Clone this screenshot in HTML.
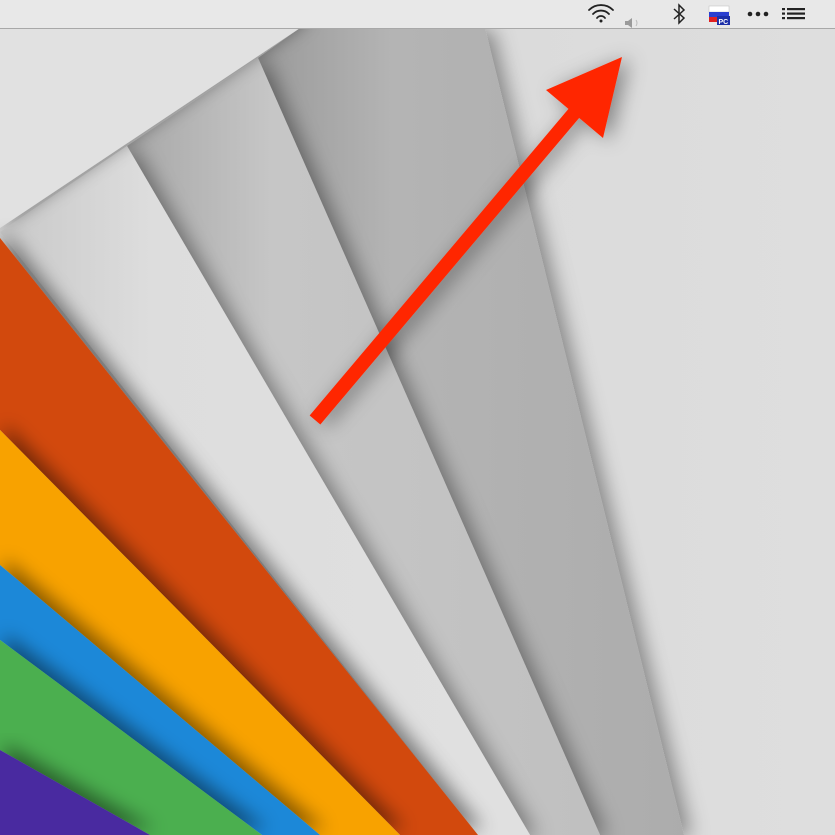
<!DOCTYPE html>
<html><head><meta charset="utf-8"><style>
html,body{margin:0;padding:0;width:835px;height:835px;overflow:hidden;background:#dddddd}
svg{display:block}
</style></head><body>
<svg width="835" height="835" viewBox="0 0 835 835" xmlns="http://www.w3.org/2000/svg">
<defs>
<filter id="sh" x="-20%" y="-20%" width="140%" height="140%">
<feDropShadow dx="7" dy="2" stdDeviation="10" flood-color="#000" flood-opacity="0.4"/>
</filter>
<filter id="sh2" x="-20%" y="-20%" width="140%" height="140%">
<feDropShadow dx="5" dy="-6" stdDeviation="9" flood-color="#000" flood-opacity="0.45"/>
</filter>
<linearGradient id="gr" x1="0" y1="0" x2="1" y2="0">
<stop offset="0" stop-color="#d6d6d6"/><stop offset="1" stop-color="#dedede"/>
</linearGradient>
<linearGradient id="g3" gradientUnits="userSpaceOnUse" x1="260" y1="0" x2="700" y2="0">
<stop offset="0" stop-color="#9a9a9a"/><stop offset="0.3" stop-color="#b4b4b4"/><stop offset="1" stop-color="#acacac"/>
</linearGradient>
<linearGradient id="g2" gradientUnits="userSpaceOnUse" x1="130" y1="0" x2="600" y2="0">
<stop offset="0" stop-color="#a8a8a8"/><stop offset="0.3" stop-color="#c6c6c6"/><stop offset="1" stop-color="#c0c0c0"/>
</linearGradient>
<linearGradient id="g1" gradientUnits="userSpaceOnUse" x1="0" y1="0" x2="500" y2="0">
<stop offset="0" stop-color="#c8c8c8"/><stop offset="0.3" stop-color="#dddddd"/><stop offset="1" stop-color="#e0e0e0"/>
</linearGradient>
</defs>
<rect x="0" y="0" width="835" height="835" fill="url(#gr)"/>
<polygon points="258,58 300,28 485,28 684,835 600,835" fill="url(#g3)" filter="url(#sh)"/>
<polygon points="127,146 258,58 600,835 530,835" fill="url(#g2)" filter="url(#sh)"/>
<polygon points="0,232 127,146 530,835 478,835" fill="url(#g1)" filter="url(#sh)"/>
<polygon points="0,0 300,0 300,28 0,228" fill="#e1e1e1" filter="url(#sh2)"/>
<polygon points="0,238 478,835 400,835 0,430" fill="#d24a10" filter="url(#sh2)"/>
<polygon points="0,430 400,835 320,835 0,565" fill="#f8a200" filter="url(#sh2)"/>
<polygon points="0,565 320,835 262,835 0,640" fill="#1e88d8" filter="url(#sh2)"/>
<polygon points="0,640 262,835 150,835 0,750" fill="#4caf50" filter="url(#sh2)"/>
<polygon points="0,750 150,835 0,835" fill="#4a2aa0" filter="url(#sh2)"/>
<!-- arrow -->
<g filter="url(#sh)">
<line x1="315" y1="420" x2="575" y2="112" stroke="#ff2600" stroke-width="14"/>
<polygon points="546,90 622,57 603,138" fill="#ff2600"/>
</g>
<!-- menu bar -->
<rect x="0" y="0" width="835" height="28" fill="#e8e8e8"/>
<rect x="0" y="28" width="835" height="1" fill="#a8a8a8"/>
<g fill="none" stroke="#222" stroke-width="1.8" stroke-linecap="round">
<path d="M589,10 A17,17 0 0 1 613,10"/>
<path d="M593,14 A11,11 0 0 1 609,14"/>
<path d="M597,18 A5,5 0 0 1 605,18"/>
</g>
<circle cx="601" cy="21" r="1.5" fill="#222"/>
<path d="M625,21 h3 l4,-3 v10 l-4,-3 h-3z" fill="#9a9a9a"/>
<path d="M636,20 q2,3 0,6" stroke="#bbb" fill="none" stroke-width="1"/>
<path d="M674,9 l10,9 l-5,5 v-18 l5,5 l-10,9" fill="none" stroke="#222" stroke-width="1.5"/>
<rect x="709" y="6" width="20" height="6" fill="#fff" stroke="#bbb" stroke-width="0.5"/>
<rect x="709" y="12" width="20" height="5" fill="#2a3fd0"/>
<rect x="709" y="17" width="20" height="5" fill="#e02020"/>
<rect x="717" y="16" width="13" height="9" fill="#1c2fa8"/>
<text x="718.5" y="24" font-family="Liberation Sans, sans-serif" font-size="7" font-weight="bold" fill="#fff">PC</text>
<circle cx="750" cy="14" r="2.3" fill="#222"/><circle cx="758" cy="14" r="2.3" fill="#222"/><circle cx="766" cy="14" r="2.3" fill="#222"/>
<g fill="#222">
<rect x="782" y="8" width="3" height="2.2"/><rect x="787" y="8" width="18" height="2.2"/>
<rect x="782" y="12.5" width="3" height="2.2"/><rect x="787" y="12.5" width="18" height="2.2"/>
<rect x="782" y="17" width="3" height="2.2"/><rect x="787" y="17" width="18" height="2.2"/>
</g>
</svg>
</body></html>
